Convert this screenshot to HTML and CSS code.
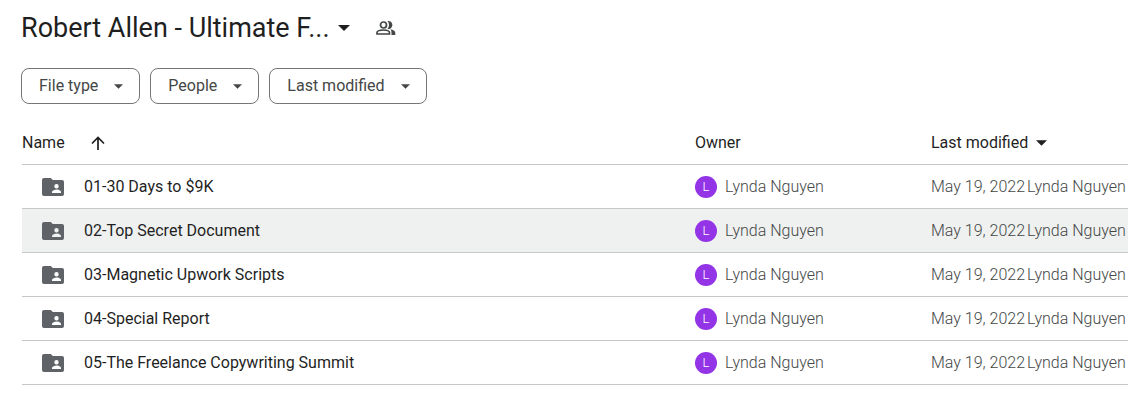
FILE: index.html
```html
<!DOCTYPE html>
<html lang="en">
<head>
  <meta charset="UTF-8">
  <meta name="viewport" content="width=device-width, initial-scale=1.0">
  <title>Robert Allen - Ultimate F...</title>
  <link rel="stylesheet" href="styles.css">
</head>
<body>
  <!--shared icons-->
  <svg class="sprite" aria-hidden="true">
    <symbol id="folder" viewBox="0 0 22 18">
      <path fill="currentColor" fill-rule="evenodd" d="M2 0h6.800l2 2H20a2 2 0 0 1 2 2v12a2 2 0 0 1-2 2H2a2 2 0 0 1-2-2V2a2 2 0 0 1 2-2zM14.500 6a2.200 2.200 0 1 0 0 4.400a2.200 2.200 0 0 0 0-4.400zM10 15h9v-1c0-1.600-2.800-2.500-4.500-2.500s-4.500.9-4.500 2.500z"/>
    </symbol>
    <symbol id="caret" viewBox="0 0 10 5">
      <path fill="currentColor" d="M0 0h10L5 5z"/>
    </symbol>
  </svg>

  <header class="heading">
    <h1><button class="title" type="button">Robert Allen - Ultimate F...<svg class="title-caret"><use href="#caret"/></svg></button></h1>
    <button class="shared" type="button" aria-label="Shared">
      <svg width="20" height="16" viewBox="0 0 20 16" fill="none" stroke="currentColor" stroke-width="1.700">
        <circle cx="7.500" cy="5" r="3"/>
        <path d="M1 14v-1.300C1 11 4.500 10 7.500 10s6 1 6 2.700V14z"/>
        <path fill="currentColor" stroke="none" d="M11.500 8.900a5.800 5.800 0 0 0 0-7.800a4 4 0 1 1 0 7.800zM14.500 9.300c2.500.5 4.800 1.600 4.800 3.500V15H15.500v-2.300c0-1.400-.3-2.500-1-3.400z"/>
      </svg>
    </button>
  </header>

  <div class="filters">
    <button class="chip" type="button">File type<svg class="caret"><use href="#caret"/></svg></button>
    <button class="chip" type="button">People<svg class="caret"><use href="#caret"/></svg></button>
    <button class="chip" type="button">Last modified<svg class="caret"><use href="#caret"/></svg></button>
  </div>

  <table class="files">
    <thead>
      <tr>
        <th class="col-name">
          <button class="sort" type="button">Name
            <svg class="arrow" viewBox="0 0 14 14" fill="none" stroke="currentColor" stroke-width="1.700"><path d="M7 14V1.500M1 7.500l6-6 6 6"/></svg>
          </button>
        </th>
        <th class="col-owner">Owner</th>
        <th class="col-modified">
          <button class="sort" type="button">Last modified<svg class="sort-caret"><use href="#caret"/></svg></button>
        </th>
      </tr>
    </thead>
    <tbody>
      <tr>
        <td class="name"><div class="cell"><svg class="folder"><use href="#folder"/></svg>01-30 Days to $9K</div></td>
        <td><div class="cell owner"><span class="avatar">L</span>Lynda Nguyen</div></td>
        <td><div class="cell modified"><span>May 19, 2022</span><span>Lynda Nguyen</span></div></td>
      </tr>
      <tr class="active">
        <td class="name"><div class="cell"><svg class="folder"><use href="#folder"/></svg>02-Top Secret Document</div></td>
        <td><div class="cell owner"><span class="avatar">L</span>Lynda Nguyen</div></td>
        <td><div class="cell modified"><span>May 19, 2022</span><span>Lynda Nguyen</span></div></td>
      </tr>
      <tr>
        <td class="name"><div class="cell"><svg class="folder"><use href="#folder"/></svg>03-Magnetic Upwork Scripts</div></td>
        <td><div class="cell owner"><span class="avatar">L</span>Lynda Nguyen</div></td>
        <td><div class="cell modified"><span>May 19, 2022</span><span>Lynda Nguyen</span></div></td>
      </tr>
      <tr>
        <td class="name"><div class="cell"><svg class="folder"><use href="#folder"/></svg>04-Special Report</div></td>
        <td><div class="cell owner"><span class="avatar">L</span>Lynda Nguyen</div></td>
        <td><div class="cell modified"><span>May 19, 2022</span><span>Lynda Nguyen</span></div></td>
      </tr>
      <tr>
        <td class="name"><div class="cell"><svg class="folder"><use href="#folder"/></svg>05-The Freelance Copywriting Summit</div></td>
        <td><div class="cell owner"><span class="avatar">L</span>Lynda Nguyen</div></td>
        <td><div class="cell modified"><span>May 19, 2022</span><span>Lynda Nguyen</span></div></td>
      </tr>
    </tbody>
  </table>
</body>
</html>
```
FILE: styles.css
```css
*{box-sizing: border-box;}
body{
  margin:0;
  padding:8px 0 16px 21px;
  background-color:#fff;
  color:#1f1f1f;
  font-family:Roboto, "Liberation Sans", sans-serif;
  font-size:16px;
  line-height:24px;
}
button{
  padding:0;
  border:0;
  background:none;
  color:inherit;
  font:inherit;
  cursor:pointer;
}
svg{
  display:block;
  flex:none;
}
.sprite{
  position:absolute;
  width:0; height:0;
}

/*title*/
.heading{
  display:flex;
  align-items:center;
  gap:26px;
}
h1{
  margin:0;
  font-size:27px;
  font-weight:400;
  line-height:40px;
}
.title{
  display:flex;
  align-items:center;
  gap:8px;
}
.title-caret{
  width:12px; height:6px;
}
.shared{color:#444746;}

/*filter chips*/
.filters{
  display:flex;
  gap:10px;
  margin-top:20px;
}
.chip{
  display:flex;
  align-items:center;
  gap:16px;
  height:36px;
  padding:0 16px 0 17px;
  border:1px solid #747775;
  border-radius:8px;
  color:#444746;
}
.caret{
  width:9px; height:5px;
}

/*file list*/
.files{
  width:calc(100% - 1px);
  margin:16px 0 0 1px;
  border-collapse:collapse;
  table-layout:fixed;
}
th, td{
  height:44px;
  padding:2px 0 0;
  border-bottom:1px solid #c7c7c7;
  font-weight:400;
  text-align:left;
  white-space:nowrap;
}
.col-owner{width:236px;}
.col-modified{width:197px;}
.sort{
  display:flex;
  align-items:center;
  gap:8px;
}
.col-name .sort{gap:26px;}
.arrow{
  width:14px; height:14px;
}
.sort-caret{
  width:11px; height:6px;
}
.cell{
  display:flex;
  align-items:center;
}
.name .cell{
  gap:20px;
  padding-left:20px;
}
.folder{
  width:22px; height:18px;
  color:#5f6368;
}
.owner, .modified{
  color:#444746;
  font-weight:300;
}
.owner{gap:8px;}
.modified{gap:2px;}
.avatar{
  width:22px; height:22px;
  border-radius:50%;
  background-color:#9334e6;
  color:#fff;
  font-size:13px;
  line-height:22px;
  text-align:center;
}
.active{background-color:#eff1f0;}
```
